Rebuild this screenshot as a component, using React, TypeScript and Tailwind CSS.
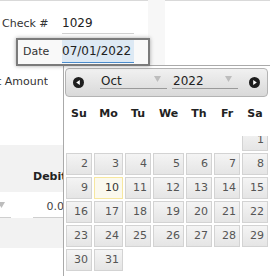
import React from "react";

const weeks: (number | null)[][] = [
  [null, null, null, null, null, null, 1],
  [2, 3, 4, 5, 6, 7, 8],
  [9, 10, 11, 12, 13, 14, 15],
  [16, 17, 18, 19, 20, 21, 22],
  [23, 24, 25, 26, 27, 28, 29],
  [30, 31, null, null, null, null, null],
];

const dayNames = ["Su", "Mo", "Tu", "We", "Th", "Fr", "Sa"];
const cols = "grid grid-cols-[26px_29px_26px_31px_26px_26px_26px] gap-x-[2px]";

const NavIcon = ({ dir }: { dir: "prev" | "next" }) => (
  <svg width="11" height="11" viewBox="0 0 11 11">
    <circle cx="5.5" cy="5.5" r="5.5" fill="#1e1e1e" />
    {dir === "prev" ? (
      <polygon points="3.2,5.5 6.8,3 6.8,8" fill="#fff" />
    ) : (
      <polygon points="7.8,5.5 4.2,3 4.2,8" fill="#fff" />
    )}
  </svg>
);

const Caret = () => (
  <svg width="7" height="6" viewBox="0 0 7 6">
    <polygon points="0,0 7,0 3.5,6" fill="#bdbdbd" />
  </svg>
);

const DayCell = ({ day }: { day: number | null }) => {
  if (day === null) return <div className="h-[22px]" />;
  const today = day === 10;
  return (
    <div
      className={`h-[22px] border text-right pr-[3px] text-[11px] leading-[20px] ${
        today
          ? "bg-[#fbf9ee] border-[#f6e7a0] text-[#363636]"
          : "bg-gradient-to-b from-[#f4f4f4] to-[#e5e5e5] border-[#d3d3d3] text-[#555]"
      }`}
    >
      {day}
    </div>
  );
};

const Select = ({ value, width }: { value: string; width: string }) => (
  <div className={`${width} h-[16px] border-b border-[#9a9a9a] flex items-end justify-between pl-[1px] pr-[6px]`}>
    <span className="text-[12px] leading-[14px] text-[#222]">{value}</span>
    <span className="mb-[6px]">
      <Caret />
    </span>
  </div>
);

export default function App() {
  return (
    <div className="relative w-[270px] h-[276px] overflow-hidden bg-white font-['DejaVu_Sans',sans-serif]">
      {/* top fields */}
      <div className="flex h-[65px]">
        <div className="w-[148px] shrink-0 border-t border-[#d9d9d9] relative z-20">
          <div className="flex h-[33px]">
            <div className="w-[62px] pl-[2px] pt-[16px] text-[11px] leading-[13px] text-[#333]">Check #</div>
            <div className="w-[72px] border-b border-[#d0d0d0] pt-[15px] text-[12px] leading-[14px] text-[#222]">
              1029
            </div>
          </div>
          <div className="ml-[16px] mt-[4px] w-[134px] h-[28px] border-2 border-[#7b7b7b] bg-[#f9f9f9] flex shadow-[0_0_4px_rgba(0,0,0,0.35)]">
            <div className="w-[44px] pl-[5px] pt-[5px] text-[11px] leading-[13px] text-[#333]">Date</div>
            <div className="w-[72px] h-[23px] bg-[#dde9f4] border-b border-[#4b8ccc] pt-[4px] text-[12px] leading-[14px] text-[#222]">
              07/01/2022
            </div>
          </div>
        </div>
        <div className="w-[17px] shrink-0 bg-[#f7f7f7]" />
        <div className="flex-1 border-t border-[#d9d9d9]" />
      </div>

      {/* amount row */}
      <div className="h-[80px] pt-[10px]">
        <div className="w-[48px] overflow-hidden whitespace-nowrap flex justify-end text-[11px] leading-[13px] text-[#333]">
          Debit/Credit Amount
        </div>
      </div>

      {/* grid header band */}
      <div className="h-[47px] bg-[#f2f2f2] pl-[33px] pt-[25px] text-[11px] leading-[13px] font-bold text-[#222]">
        Debit
      </div>

      <div className="h-[26px] flex">
        <div className="w-[13px] border-b border-[#cfcfcf] overflow-hidden pt-[10px] -ml-[2px]">
          <Caret />
        </div>
        <div className="ml-[22px] w-[40px] border-b border-[#cfcfcf] text-right pr-[2px] pt-[8px] text-[11px] leading-[13px] text-[#444]">
          0.00
        </div>
      </div>

      <div className="h-[30px] bg-[#f2f2f2]" />

      {/* datepicker popup */}
      <div className="absolute left-[63px] top-[65px] w-[207px] h-[211px] bg-white border-l border-t border-[#aaa] z-10">
        <div className="ml-[1px] mt-[2px] w-[203px] h-[29px] rounded-[4px] border border-[#b3b3b3] bg-gradient-to-b from-[#f1f1f1] to-[#d9d9d9] flex items-center pl-[7px]">
          <NavIcon dir="prev" />
          <div className="ml-[16px] mb-[3px]">
            <Select value="Oct" width="w-[67px]" />
          </div>
          <div className="ml-[5px] mb-[3px]">
            <Select value="2022" width="w-[66px]" />
          </div>
          <div className="ml-[11px]">
            <NavIcon dir="next" />
          </div>
        </div>

        <div className={`${cols} pl-[2px] h-[39px] pt-[10px]`}>
          {dayNames.map((d) => (
            <div key={d} className="text-center text-[11px] leading-[13px] font-bold text-[#222]">
              {d}
            </div>
          ))}
        </div>

        <div className="h-[15px] overflow-hidden flex flex-col justify-end pl-[2px]">
          <div className={cols}>
            {weeks[0].map((d, i) => (
              <DayCell key={i} day={d} />
            ))}
          </div>
        </div>

        <div className="flex flex-col gap-y-[2px] mt-[2px] pl-[2px]">
          {weeks.slice(1).map((w, wi) => (
            <div key={wi} className={cols}>
              {w.map((d, i) => (
                <DayCell key={i} day={d} />
              ))}
            </div>
          ))}
        </div>
      </div>
    </div>
  );
}
